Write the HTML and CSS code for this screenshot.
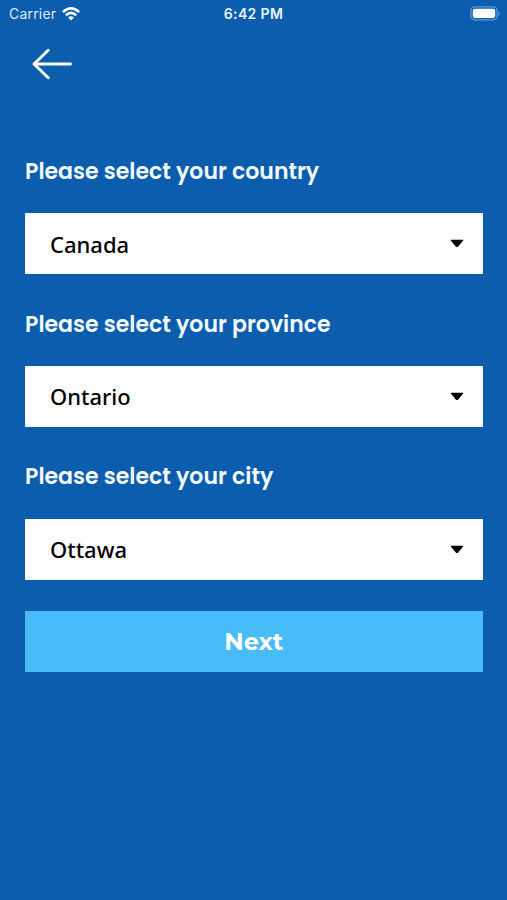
FILE: index.html
```html
<!DOCTYPE html>
<html lang="en">
<head>
<meta charset="utf-8">
<meta name="viewport" content="width=device-width, initial-scale=1">
<title>Select your location</title>
<link rel="stylesheet" href="styles.css">
</head>
<body>
<header class="status">
  <div class="carrier"><span>Carrier</span>
    <svg viewBox="0 0 18 14" width="18" height="14" fill="none" stroke="#fff" stroke-width="2.5"><path d="M.9 5.1Q9-2.3 17.1 5.1M3.8 8.2Q9 3.5 14.2 8.2"/><path d="M6.1 10.4Q9 8 11.9 10.4L9 13.4Z" fill="#fff" stroke="none"/></svg>
  </div>
  <time class="clock">6:42 PM</time>
  <svg class="battery" viewBox="0 0 31 15" width="31" height="15"><rect x=".8" y=".8" width="26.4" height="13" rx="4" fill="none" stroke="#6098d5" stroke-width="1.3"/><rect x="2.8" y="2.7" width="22.4" height="9.2" rx="2" fill="#fff"/><path d="M28.5 5.2Q31 7.3 28.5 9.4Z" fill="#6098d5"/></svg>
</header>
<nav class="nav">
  <button class="back" aria-label="Back"><svg viewBox="0 0 40 32" width="40" height="32" fill="none" stroke="#fff" stroke-width="2.9" stroke-linecap="round" stroke-linejoin="round"><path d="M16.2 2.2 2 16l14.2 13.8"/><path d="M2.5 16H38.5"/></svg></button>
</nav>
<main class="form">
  <section class="field">
    <h2 class="label">Please select your country</h2>
    <button class="select"><span>Canada</span><svg class="caret" viewBox="0 0 14 9" width="14" height="9"><path d="M1.2.8H12.8Q13.7.9 13 1.7L8 7.7Q7 8.5 6 7.7L1 1.7Q.3.9 1.2.8Z"/></svg></button>
  </section>
  <section class="field">
    <h2 class="label">Please select your province</h2>
    <button class="select"><span>Ontario</span><svg class="caret" viewBox="0 0 14 9" width="14" height="9"><path d="M1.2.8H12.8Q13.7.9 13 1.7L8 7.7Q7 8.5 6 7.7L1 1.7Q.3.9 1.2.8Z"/></svg></button>
  </section>
  <section class="field">
    <h2 class="label">Please select your city</h2>
    <button class="select"><span>Ottawa</span><svg class="caret" viewBox="0 0 14 9" width="14" height="9"><path d="M1.2.8H12.8Q13.7.9 13 1.7L8 7.7Q7 8.5 6 7.7L1 1.7Q.3.9 1.2.8Z"/></svg></button>
  </section>
  <button class="next">Next</button>
</main>
</body>
</html>
```
FILE: styles.css
```css
* { box-sizing: border-box; }
body { margin: 0; min-height: 900px; background: #0d5dae; color: #fff; font-family: Inter, sans-serif; }
button { margin: 0; padding: 0; border: 0; border-radius: 0; background: none; color: inherit; }
svg { display: block; flex: none; }
.status { display: grid; grid-template-columns: 1fr auto 1fr; align-items: center; height: 27px; padding: 0 6px 0 9px; }
.carrier { display: flex; align-items: center; gap: 6px; font-size: 14px; color: #dceaff; letter-spacing: .2px; }
.clock { font-size: 14px; font-weight: 600; letter-spacing: .35px; color: #eaf4ff; margin-right: 3px; }
.battery { justify-self: end; }
.nav { height: 127px; padding: 21px 0 0 32px; }
.back { display: block; }
.form { display: flex; flex-direction: column; padding: 0 24.5px 0 25px; }
.field { height: 152.7px; }
.label { margin: 0; height: 59.3px; padding-top: 1px; font: 600 22px/34px Poppins, Inter, sans-serif; white-space: nowrap; color: #f2fbff; }
.select { display: flex; align-items: center; justify-content: space-between; width: 100%; height: 61px; padding: 0 19px 0 25px; background: #fff; color: #000; font: 500 22px/30px "Noto Sans", "Open Sans", sans-serif; }
.next { height: 61px; margin-top: -1px; background: #48bbf9; font: 700 24px/30px Montserrat, Inter, sans-serif; }
```
